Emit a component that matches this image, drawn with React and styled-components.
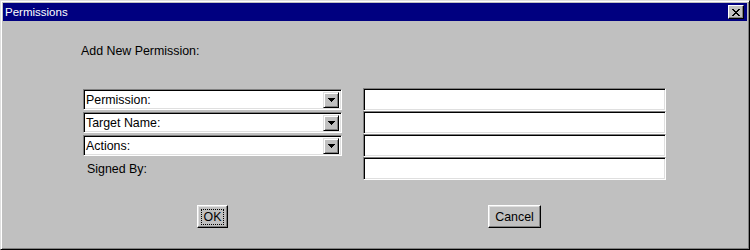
import React from 'react';
import styled, { createGlobalStyle } from 'styled-components';

const GlobalStyle = createGlobalStyle`
  html, body {
    margin: 0;
    padding: 0;
    background: #c0c0c0;
  }
  body {
    font-family: "Liberation Sans", Arial, sans-serif;
  }
`;

const Window = styled.div`
  box-sizing: border-box;
  width: 750px;
  height: 250px;
  display: flex;
  flex-direction: column;
  background: #c0c0c0;
  border-top: 1px solid #dfdfdf;
  border-left: 1px solid #dfdfdf;
  border-right: 1px solid #000;
  border-bottom: 1px solid #000;
  box-shadow: inset 1px 1px #fff, inset -1px -1px #808080;
  padding: 2px;
  font-family: "Liberation Sans", Arial, sans-serif;
  font-size: 12.4px;
  color: #000;
`;

const TitleBar = styled.div`
  height: 18px;
  flex: none;
  display: flex;
  align-items: center;
  justify-content: space-between;
  background: #000080;
  color: #fff;
  padding: 0 3px 0 2px;
`;

const Title = styled.span`
  font-size: 11.5px;
  line-height: 18px;
`;

const CloseButton = styled.div`
  box-sizing: border-box;
  width: 16px;
  height: 14px;
  background: #c0c0c0;
  border-top: 1px solid #fff;
  border-left: 1px solid #fff;
  border-right: 1px solid #000;
  border-bottom: 1px solid #000;
  box-shadow: inset -1px -1px #808080;
  display: flex;
  align-items: center;
  justify-content: center;
`;

const Body = styled.div`
  flex: 1;
  padding: 23px 0 0 0;
`;

const Heading = styled.div`
  padding-left: 78px;
  line-height: 14px;
  height: 14px;
`;

const FormGrid = styled.div`
  display: grid;
  grid-template-columns: 259px 303px;
  grid-auto-rows: 23px;
  column-gap: 21px;
  margin-top: 30px;
  padding-left: 80px;
`;

const Choice = styled.div`
  box-sizing: border-box;
  height: 21px;
  margin-top: 1px;
  background: #fff;
  border-top: 1px solid #808080;
  border-left: 1px solid #808080;
  border-right: 1px solid #fff;
  border-bottom: 1px solid #fff;
  box-shadow: inset 1px 1px #000, inset -1px -1px #dfdfdf;
  display: flex;
  align-items: center;
  justify-content: space-between;
  padding: 0 2px 0 2px;
`;

const ChoiceArrow = styled.div`
  box-sizing: border-box;
  width: 16px;
  height: 16px;
  background: #c0c0c0;
  border-top: 1px solid #dfdfdf;
  border-left: 1px solid #dfdfdf;
  border-right: 1px solid #000;
  border-bottom: 1px solid #000;
  box-shadow: inset 1px 1px #fff, inset -1px -1px #808080;
  display: flex;
  align-items: center;
  justify-content: center;
`;

const TextField = styled.div`
  box-sizing: border-box;
  height: 23px;
  background: #fff;
  border-top: 1px solid #808080;
  border-left: 1px solid #808080;
  border-right: 1px solid #fff;
  border-bottom: 1px solid #fff;
  box-shadow: inset 1px 1px #000, inset -1px -1px #dfdfdf;
`;

const FieldLabel = styled.div`
  display: flex;
  align-items: center;
  padding-left: 4px;
`;

const ButtonRow = styled.div`
  display: flex;
  gap: 260px;
  margin-top: 25px;
  padding-left: 194px;
`;

const PushButton = styled.div`
  box-sizing: border-box;
  width: ${props => props.$width}px;
  height: 23px;
  background: #c0c0c0;
  border-top: 1px solid #fff;
  border-left: 1px solid #fff;
  border-right: 1px solid #000;
  border-bottom: 1px solid #000;
  box-shadow: inset -1px -1px #808080, inset 1px 1px #dfdfdf;
  display: flex;
  align-items: center;
  justify-content: center;
`;

const FocusText = styled.span`
  padding: 0 2px;
  line-height: 14px;
  outline: ${props => props.$focused ? '1px dotted #000' : 'none'};
`;

const Arrow = () => (
  <svg width="7" height="4" viewBox="0 0 7 4">
    <path d="M0 0h7L3.5 4z" fill="#000" shapeRendering="crispEdges" />
  </svg>
);

const CloseIcon = () => (
  <svg width="8" height="7" viewBox="0 0 8 7">
    <path d="M0 0h2l2 2.5L6 0h2L5 3.5 8 7H6L4 4.5 2 7H0l3-3.5z" fill="#000" shapeRendering="crispEdges" />
  </svg>
);

const choices = ['Permission:', 'Target Name:', 'Actions:'];

export default function App() {
  return (
    <>
      <GlobalStyle />
      <Window>
        <TitleBar>
          <Title>Permissions</Title>
          <CloseButton><CloseIcon /></CloseButton>
        </TitleBar>
        <Body>
          <Heading>Add New Permission:</Heading>
          <FormGrid>
            {choices.map(label => (
              <React.Fragment key={label}>
                <Choice>
                  <span>{label}</span>
                  <ChoiceArrow><Arrow /></ChoiceArrow>
                </Choice>
                <TextField />
              </React.Fragment>
            ))}
            <FieldLabel>Signed By:</FieldLabel>
            <TextField />
          </FormGrid>
          <ButtonRow>
            <PushButton $width={31}><FocusText $focused>OK</FocusText></PushButton>
            <PushButton $width={53}><FocusText>Cancel</FocusText></PushButton>
          </ButtonRow>
        </Body>
      </Window>
    </>
  );
}
